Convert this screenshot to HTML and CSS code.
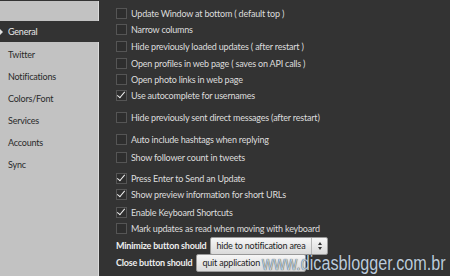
FILE: index.html
```html
<!DOCTYPE html>
<html lang="en">
<head>
    <meta charset="UTF-8">
    <title>Settings</title>
    <link rel="stylesheet" href="styles.css">
</head>
<body>
    <div class="window">
        <div class="sidebar">
            <div class="side-top"></div>
            <div class="side-item active"><span class="arrow"></span>General</div>
            <div class="side-panel">
                <div class="side-item">Twitter</div>
                <div class="side-item">Notifications</div>
                <div class="side-item">Colors/Font</div>
                <div class="side-item">Services</div>
                <div class="side-item">Accounts</div>
                <div class="side-item">Sync</div>
            </div>
        </div>
        <div class="content">
            <div class="row"><span class="box"></span>Update Window at bottom ( default top )</div>
            <div class="row"><span class="box"></span>Narrow columns</div>
            <div class="row sp1"><span class="box"></span>Hide previously loaded updates ( after restart )</div>
            <div class="row sp1"><span class="box"></span>Open profiles in web page ( saves on API calls )</div>
            <div class="row"><span class="box"></span>Open photo links in web page</div>
            <div class="row"><span class="box checked"></span>Use autocomplete for usernames</div>
            <div class="row sp6"><span class="box"></span>Hide previously sent direct messages (after restart)</div>
            <div class="row sp6"><span class="box"></span>Auto include hashtags when replying</div>
            <div class="row sp2"><span class="box"></span>Show follower count in tweets</div>
            <div class="row sp5"><span class="box checked"></span>Press Enter to Send an Update</div>
            <div class="row"><span class="box checked"></span>Show preview information for short URLs</div>
            <div class="row sp2"><span class="box checked"></span>Enable Keyboard Shortcuts</div>
            <div class="row"><span class="box"></span>Mark updates as read when moving with keyboard</div>
            <div class="field sp1">
                <span class="field-label">Minimize button should</span>
                <div class="select wide"><span>hide to notification area</span><span class="spin"><i class="up"></i><i class="down"></i></span></div>
            </div>
            <div class="field">
                <span class="field-label">Close button should</span>
                <div class="select"><span>quit application</span></div>
            </div>
        </div>
        <div class="watermark">www.dicasblogger.com.br</div>
    </div>
</body>
</html>
```

FILE: styles.css
```css
body {
    margin: 0;
    background: #333333;
    font-family: Lato, "Open Sans", sans-serif;
}
.window {
    position: relative;
    width: 450px;
    height: 276px;
    overflow: hidden;
    display: flex;
    background: #333333;
}
.sidebar {
    width: 99px;
    display: flex;
    flex-direction: column;
}
.side-top {
    height: 20px;
    margin-top: 1px;
    background: #c2c2c2;
    border-right: 1px solid #dcdcdc;
}
.side-panel {
    flex: 1;
    background: #c2c2c2;
    border-right: 1px solid #dcdcdc;
    padding-top: 2px;
}
.side-item {
    height: 22px;
    line-height: 22px;
    padding-left: 8px;
    font-size: 9px;
    letter-spacing: -0.2px;
    color: #2a2a2a;
}
.side-item.active {
    position: relative;
    height: 21px;
    line-height: 21px;
    color: #e8e8e8;
}
.arrow {
    position: absolute;
    left: 0;
    top: 8px;
    border-left: 3px solid #e0e0e0;
    border-top: 3px solid transparent;
    border-bottom: 3px solid transparent;
}
.content {
    padding: 5px 0 0 17px;
    display: flex;
    flex-direction: column;
}
.row {
    height: 16px;
    display: flex;
    align-items: center;
    font-size: 9px;
    letter-spacing: -0.2px;
    color: #dddddd;
    white-space: nowrap;
}
.sp1 { margin-top: 1px; }
.sp2 { margin-top: 2px; }
.sp5 { margin-top: 5px; }
.sp6 { margin-top: 6px; }
.box {
    position: relative;
    width: 9px;
    height: 9px;
    margin-right: 4px;
    border: 1px solid #555555;
    background: #2e2e2e;
    flex-shrink: 0;
}
.box.checked::after {
    content: "";
    position: absolute;
    left: 2px;
    top: -1px;
    width: 3px;
    height: 7px;
    border-right: 1.5px solid #f0f0f0;
    border-bottom: 1.5px solid #f0f0f0;
    transform: rotate(40deg);
}
.field {
    height: 17px;
    display: flex;
    align-items: center;
    gap: 4px;
    font-size: 9px;
    letter-spacing: -0.2px;
    color: #eeeeee;
    white-space: nowrap;
}
.field-label {
    font-weight: 700;
}
.select {
    height: 18px;
    display: flex;
    align-items: center;
    background: linear-gradient(#f6f6f6, #dadada);
    border: 1px solid #999999;
    border-radius: 2px;
    color: #1e1e1e;
    padding-left: 5px;
    width: 110px;
    box-sizing: border-box;
}
.select.wide {
    width: 118px;
    justify-content: space-between;
}
.spin {
    width: 15px;
    height: 16px;
    border-left: 1px solid #b5b5b5;
    display: flex;
    flex-direction: column;
    align-items: center;
    justify-content: center;
    gap: 2px;
}
.spin i {
    border-left: 2.5px solid transparent;
    border-right: 2.5px solid transparent;
}
.spin .up { border-bottom: 3px solid #333; }
.spin .down { border-top: 3px solid #333; }
.watermark {
    position: absolute;
    left: 262px;
    top: 252px;
    font-family: "Liberation Sans", Arial, sans-serif;
    font-size: 20px;
    color: #bccbdb;
    text-shadow: 0 0 1px #222;
    white-space: nowrap;
    transform: scaleX(0.81);
    transform-origin: left top;
}
```
